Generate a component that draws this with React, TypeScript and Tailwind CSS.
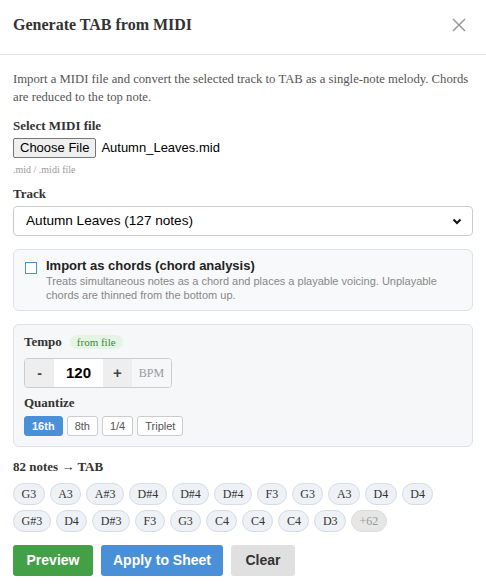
import React from 'react';

const serif = "font-['Liberation_Serif','Times_New_Roman',serif]";
const sans = "font-['Liberation_Sans',Arial,sans-serif]";

const notesRow1 = ['G3', 'A3', 'A#3', 'D#4', 'D#4', 'D#4', 'F3', 'G3', 'A3', 'D4', 'D4'];
const notesRow2 = ['G#3', 'D4', 'D#3', 'F3', 'G3', 'C4', 'C4', 'C4', 'D3'];

const Chip: React.FC<{ label: string; muted?: boolean }> = ({ label, muted }) => (
  <span
    className={`h-[22px] px-[7.5px] flex items-center rounded-full border text-[12px] ${
      muted ? 'bg-[#e6e6e6] border-[#dcdcdc] text-[#999]' : 'bg-[#eef1f6] border-[#d6dce5] text-[#333]'
    }`}
  >
    {label}
  </span>
);

export default function App() {
  const quantize = ['16th', '8th', '1/4', 'Triplet'];

  return (
    <div className={`w-[486px] h-[584px] bg-white ${serif} text-[#333] overflow-hidden`}>
      <div className="h-[55px] flex items-center justify-between pb-[4px] px-[13px] border-b border-[#e2e2e2]">
        <h2 className="text-[16px] font-bold text-[#333]">Generate TAB from MIDI</h2>
        <svg width="14" height="14" viewBox="0 0 14 14" className="mr-[7px]">
          <path d="M1 1L13 13M13 1L1 13" stroke="#999" strokeWidth="1.5" />
        </svg>
      </div>

      <div className="px-[13px] pt-[15px]">
        <p className="text-[12.7px] leading-[18px] text-[#555]">
          Import a MIDI file and convert the selected track to TAB as a single-note melody. Chords are reduced to the
          top note.
        </p>

        <div className="mt-[12px] text-[13px] leading-[15px] font-bold">Select MIDI file</div>
        <div className={`mt-[5px] flex items-center ${sans} text-[13px] text-black`}>
          <span className="h-[20px] px-[6px] flex items-center bg-[#efefef] border border-[#767676] rounded-[2px]">
            Choose File
          </span>
          <span className="ml-[5px]">Autumn_Leaves.mid</span>
        </div>
        <div className="mt-[6px] text-[10px] leading-[12px] text-[#999]">.mid / .midi file</div>

        <div className="mt-[10px] text-[13px] leading-[15px] font-bold">Track</div>
        <div
          className={`mt-[5px] h-[30px] flex items-center justify-between px-[12px] border border-[#ccc] rounded-[4px] ${sans} text-[13.6px] text-black`}
        >
          <span>Autumn Leaves (127 notes)</span>
          <svg width="10" height="7" viewBox="0 0 10 7" className="mr-[-2px]">
            <path d="M1.5 1.5L5 5L8.5 1.5" stroke="#111" strokeWidth="2" fill="none" />
          </svg>
        </div>

        <div className="mt-[13px] border border-[#dde1e7] rounded-[6px] bg-[#f8f9fb] px-[11px] pt-[8px] pb-[8px] flex gap-[9px]">
          <span className="mt-[4px] w-[12px] h-[12px] border border-[#4a90d9] bg-white shrink-0" />
          <div className={sans}>
            <div className="text-[13px] font-semibold text-[#222] leading-[16px]">Import as chords (chord analysis)</div>
            <div className="text-[11px] leading-[14px] text-[#888]">
              Treats simultaneous notes as a chord and places a playable voicing. Unplayable chords are thinned from the
              bottom up.
            </div>
          </div>
        </div>

        <div className="mt-[13px] border border-[#dde1e7] rounded-[6px] bg-[#f6f7f9] px-[10px] pt-[9px] pb-[10px]">
          <div className="flex items-center gap-[8px] h-[16px]">
            <span className="text-[13px] font-bold">Tempo</span>
            <span className="px-[7px] h-[14px] flex items-center rounded-full bg-[#e6f4e6] text-[#3a8a3a] text-[11px]">
              from file
            </span>
          </div>
          <div className="mt-[8px] inline-flex align-top h-[30px] border border-[#ccc] rounded-[4px] overflow-hidden">
            <span className={`w-[29px] flex items-center justify-center bg-[#eeeeee] ${sans} font-bold text-[14px] text-[#444]`}>-</span>
            <span className={`w-[49px] flex items-center justify-center bg-white ${sans} font-bold text-[15px] text-black`}>120</span>
            <span className={`w-[29px] flex items-center justify-center bg-[#eeeeee] ${sans} font-bold text-[15px] text-[#444]`}>+</span>
            <span className="w-[39px] flex items-center justify-center bg-[#f6f7f9] text-[12px] text-[#999]">BPM</span>
          </div>
          <div className="mt-[7px] text-[13px] leading-[15px] font-bold">Quantize</div>
          <div className={`mt-[6px] flex gap-[4px] ${sans} text-[11px]`}>
            {quantize.map((q, i) => (
              <span
                key={q}
                className={`h-[20px] px-[7px] flex items-center rounded-[3px] border ${
                  i === 0 ? 'bg-[#4a90d9] border-[#4a90d9] text-white font-bold' : 'bg-white border-[#ccc] text-[#555]'
                }`}
              >
                {q}
              </span>
            ))}
          </div>
        </div>

        <div className="mt-[12px] text-[13px] leading-[15px] font-bold">82 notes → TAB</div>
        <div className="mt-[9px] flex flex-col gap-[5px]">
          <div className="flex gap-[5px]">
            {notesRow1.map((n, i) => (
              <Chip key={i} label={n} />
            ))}
          </div>
          <div className="flex gap-[5px]">
            {notesRow2.map((n, i) => (
              <Chip key={i} label={n} />
            ))}
            <Chip label="+62" muted />
          </div>
        </div>

        <div className={`mt-[13px] flex gap-[8px] ${sans} text-[14px] font-bold`}>
          <button className="h-[31px] w-[80px] rounded-[3px] bg-[#43a047] text-white">Preview</button>
          <button className="h-[31px] w-[122px] rounded-[3px] bg-[#4a90d9] text-white">Apply to Sheet</button>
          <button className="h-[31px] w-[64px] rounded-[3px] bg-[#e0e0e0] text-[#333]">Clear</button>
        </div>
      </div>
    </div>
  );
}
